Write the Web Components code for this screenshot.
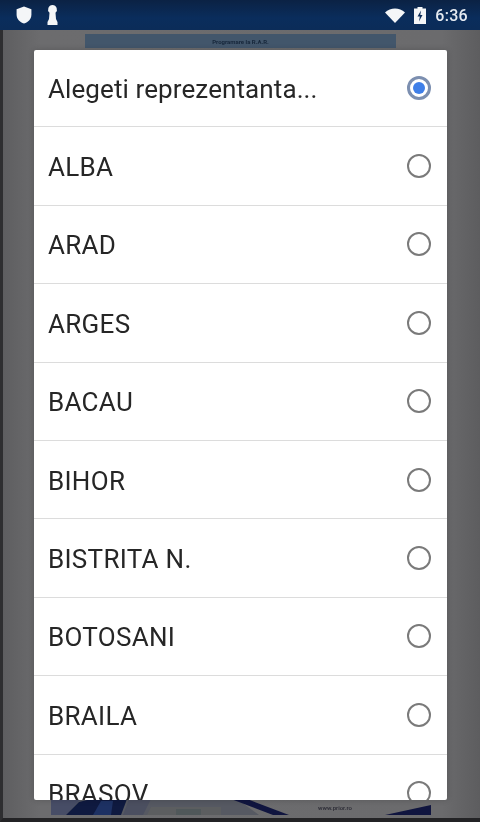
<!DOCTYPE html>
<html lang="ro"><head><meta charset="utf-8"><title>Programare la R.A.R.</title>
<style>
html,body{margin:0;padding:0;height:100%;background:#1c1c1e;overflow:hidden}
body{font-family:Roboto,"Liberation Sans",sans-serif}
</style></head><body>
<phone-screen>
  <status-bar slot="status" time="6:36"></status-bar>
  <app-backdrop slot="backdrop"></app-backdrop>
  <choice-dialog slot="dialog">
    <choice-row checked>Alegeti reprezentanta...</choice-row>
    <choice-row>ALBA</choice-row>
    <choice-row>ARAD</choice-row>
    <choice-row>ARGES</choice-row>
    <choice-row>BACAU</choice-row>
    <choice-row>BIHOR</choice-row>
    <choice-row>BISTRITA N.</choice-row>
    <choice-row>BOTOSANI</choice-row>
    <choice-row>BRAILA</choice-row>
    <choice-row>BRASOV</choice-row>
  </choice-dialog>
</phone-screen>
<script>
class PhoneScreen extends HTMLElement{
  constructor(){super();this.attachShadow({mode:'open'}).innerHTML=`<style>
  :host{display:flex;flex-direction:column;width:480px;height:822px;position:relative;overflow:hidden;background:#1f1f21;filter:blur(.35px)}
  .main{flex:1;position:relative;display:flex;min-height:0}
  .over{position:absolute;left:34px;top:20px}
  </style><slot name="status"></slot><div class="main"><slot name="backdrop"></slot><div class="over"><slot name="dialog"></slot></div></div>`}
}
class StatusBar extends HTMLElement{
  constructor(){super();this.attachShadow({mode:'open'}).innerHTML=`<style>
  :host{display:flex;align-items:center;height:30px;flex:none;box-sizing:border-box;padding:0 12px 0 16px;background:linear-gradient(#0b2244,#0a2d5c 60%,#0b2c58);color:#e6ebf1;font:500 16px Roboto,sans-serif}
  .l{display:flex;align-items:center;gap:15px}
  .r{margin-left:auto;display:flex;align-items:center;gap:9px}
  svg{display:block;fill:#f4f6f8}
  .t{letter-spacing:.3px}
  </style><div class="l">
  <svg width="16" height="18" viewBox="0 0 15 17"><path d="M7.500.5 14.500 3v5.200c0 4-3 7-7 8.300-4-1.300-7-4.300-7-8.300V3z"/></svg>
  <svg width="11" height="20" viewBox="0 0 11 20"><path d="M5.500 0a4.500 4.500 0 0 1 3 7.800L9 14l1.500 3v3H.5v-3L2 14l.5-6.200a4.500 4.500 0 0 1 3-7.800z"/></svg>
  </div><div class="r">
  <svg width="20" height="15" viewBox="0 0 20 15"><path d="M0 4.500C5.500-.9 14.500-.9 20 4.500L10 15z"/></svg>
  <svg width="12" height="17" viewBox="0 0 12 17"><path fill-rule="evenodd" d="M3.500 0h5v1.500H12V17H0V1.500h3.500zM7 3.500 3.500 9.500h2.300L5 14.500l3.500-6.500H6.300z"/></svg>
  <span class="t"></span></div>`;
  this.shadowRoot.querySelector('.t').textContent=this.getAttribute('time')||''}
}
class AppBackdrop extends HTMLElement{
  constructor(){super();this.attachShadow({mode:'open'}).innerHTML=`<style>
  :host{display:flex;flex-direction:column;flex:1;box-sizing:border-box;min-width:0;border-left:3px solid #2e2e30;border-bottom:4px solid #232325;background:linear-gradient(90deg,#5e5e60,#6c6c6e 8%,#6b6b6d 92%,#5d5d5f);padding:4px 84px 3px 82px}
  .title{height:14px;flex:none;margin:0;background:#42566b;color:#16263a;font:700 6px/15px Roboto,sans-serif;text-align:center}
  .sp{flex:1}
  .img{position:relative;height:16px;margin:0 -34px -1px;flex:none;top:-1px}
  svg{display:block;width:380px;height:16px;filter:blur(.5px)}
  .u{position:absolute;left:264px;top:5px;width:40px;text-align:center;font:500 6px/8px Roboto,sans-serif;color:#2a2a34}
  </style><div class="title">Programare la R.A.R.</div><div class="sp"></div>
  <div class="img"><svg viewBox="0 0 380 16" preserveAspectRatio="none">
   <path d="M0 0H186L208 16H0z" fill="#565962"/>
   <path d="M0 0H30L15 16H0z" fill="#474d66"/>
   <path d="M15 16 28 3 40 0H76L70 16z" fill="#0f1a40"/>
   <path d="M42 16 50 2H62L60 16z" fill="#1d3163"/>
   <path d="M78 0H100L92 16H72z" fill="#4b4f60"/>
   <path d="M100 8H170V16H96z" fill="#5c5e60"/>
   <path d="M125 10H150V16H125z" fill="#50585a"/>
   <path d="M180 0H196L238 16H222z" fill="#10153f"/>
   <path d="M334 16 380 6V16z" fill="#10153f"/>
  </svg><div class="u">www.prior.ro</div></div>`}
}
class ChoiceDialog extends HTMLElement{
  constructor(){super();this.attachShadow({mode:'open'}).innerHTML=`<style>
  :host{display:block;width:413px;height:750px;background:#fff;border-radius:2px;overflow:hidden;box-shadow:0 0 6px rgba(0,0,0,.18)}
  .list{display:flex;flex-direction:column;margin-top:-1px}
  </style><div class="list"><slot></slot></div>`}
}
class ChoiceRow extends HTMLElement{
  constructor(){super();this.attachShadow({mode:'open'}).innerHTML=`<style>
  :host{display:flex;align-items:center;flex:none;height:78.4px;box-sizing:border-box;padding:0 16px 0 14px;border-bottom:1px solid #dcdcdc;color:#262626;font:400 26px Roboto,sans-serif;letter-spacing:.3px}
  :host([checked]){letter-spacing:.1px}
  .t{flex:1;white-space:nowrap;padding-top:2px}
  .rb{width:24px;height:24px;box-sizing:border-box;border-radius:50%;border:2px solid #7a7a7a;flex:none;display:flex;align-items:center;justify-content:center}
  :host([checked]) .rb{border:3px solid #7c8fb0;background:#fff}
  :host([checked]) .rb::after{content:"";width:12px;height:12px;border-radius:50%;background:#3f7fe8}
  </style><span class="t"><slot></slot></span><span class="rb"></span>`}
}
customElements.define('phone-screen',PhoneScreen);
customElements.define('status-bar',StatusBar);
customElements.define('app-backdrop',AppBackdrop);
customElements.define('choice-dialog',ChoiceDialog);
customElements.define('choice-row',ChoiceRow);
</script></body></html>
